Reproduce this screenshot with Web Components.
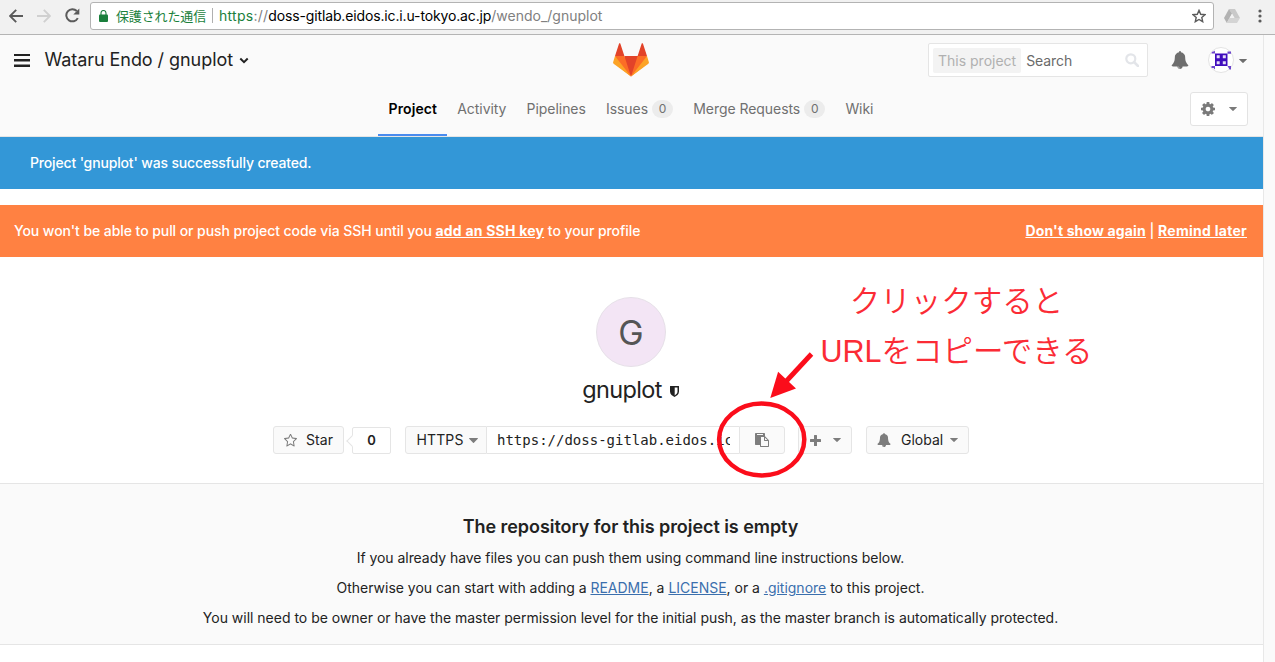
<!DOCTYPE html>
<html lang="en">
<head>
<meta charset="utf-8">
<title>Wataru Endo / gnuplot</title>
<style>
html,body{margin:0;height:100%;overflow:hidden;background:#fff}
body{font:14px/20px Inter,"Noto Sans CJK JP",sans-serif;color:#222}
</style>
</head>
<body>
<gl-page></gl-page>
<script>
const ICONS = {
  bell: ['0 0 1792 1792','<path d="M912 1696q0-16-16-16-59 0-101.5-42.5t-42.5-101.5q0-16-16-16t-16 16q0 73 51.5 124.5t124.5 51.5q16 0 16-16zm816-288q0 52-38 90t-90 38h-448q0 106-75 181t-181 75-181-75-75-181h-448q-52 0-90-38t-38-90q50-42 91-88t85-119.5 74.5-158.5 50-206 19.5-260q0-152 117-282.5t307-158.5q-8-19-8-39 0-40 28-68t68-28 68 28 28 68q0 20-8 39 190 28 307 158.5t117 282.5q0 139 19.5 260t50 206 74.5 158.5 85 119.5 91 88z"/>'],
  cog: ['128 128 1536 1536','<path d="M1152 896q0-106-75-181t-181-75-181 75-75 181 75 181 181 75 181-75 75-181zm512-109v222q0 12-8 23t-20 13l-185 28q-19 54-39 91 35 50 107 138 10 12 10 25t-9 23q-27 37-99 108t-94 71q-12 0-26-9l-138-108q-44 23-91 38-16 136-29 186-7 28-36 28h-222q-14 0-24.5-8.5t-11.5-21.5l-28-184q-49-16-90-37l-141 107q-10 9-25 9-14 0-25-11-126-114-165-168-7-10-7-23 0-12 8-23 15-21 51-66.5t54-70.5q-27-50-41-99l-183-27q-13-2-21-12.5t-8-23.5v-222q0-12 8-23t19-13l186-28q14-46 39-92-40-57-107-138-10-12-10-24 0-10 9-23 26-36 98.5-107.5t94.5-71.5q13 0 26 10l138 107q44-23 91-38 16-136 29-186 7-28 36-28h222q14 0 24.5 8.5t11.5 21.5l28 184q49 16 90 37l142-107q9-9 24-9 13 0 25 10 129 119 165 170 7 8 7 22 0 12-8 23-15 21-51 66.5t-54 70.5q26 50 41 98l183 28q13 2 21 12.5t8 23.5z"/>'],
  star: ['64 100 1664 1580','<path d="M1201 1004l306-297-422-62-189-382-189 382-422 62 306 297-73 421 378-199 377 199zm527-357q0 22-26 48l-363 354 86 500q1 7 1 20 0 50-41 50-19 0-40-12l-449-236-449 236q-22 12-40 12-21 0-31.5-14.5t-10.5-35.5q0-6 2-20l86-500-364-354q-25-27-25-48 0-37 56-46l502-73 225-455q19-41 49-41t49 41l225 455 502 73q56 9 56 46z"/>'],
  copy: ['0 0 1792 1792','<path d="M768 1664h896v-640h-416q-40 0-68-28t-28-68v-416h-384v1152zm256-1440v-64q0-13-9.5-22.5t-22.5-9.5h-704q-13 0-22.5 9.5t-9.5 22.5v64q0 13 9.5 22.5t22.5 9.5h704q13 0 22.5-9.5t9.5-22.5zm256 672h299l-299-299v299zm512 128v672q0 40-28 68t-68 28h-960q-40 0-68-28t-28-68v-160h-544q-40 0-68-28t-28-68v-1344q0-40 28-68t68-28h1088q40 0 68 28t28 68v328q21 13 36 28l408 408q28 28 48 76t20 88z"/>'],
  plus: ['0 0 11 11','<path d="M4 .6Q4 0 4.6 0h1.8Q7 0 7 .6V4h3.4q.6 0 .6.6v1.8q0 .6-.6.6H7v3.4q0 .6-.6.6H4.600Q4 11 4 10.400V7H.6Q0 7 0 6.400V4.600Q0 4 .6 4H4z"/>'],
  caret: ['0 0 8 4','<path d="M.4 0h7.200q.6 0 .2.5L4.400 3.800q-.4.4-.8 0L.2.5Q-.2 0 .4 0z"/>'],
  chevron: ['0 0 10 7','<path d="M1.300 1.500 5 5.100 8.700 1.500" fill="none" stroke="currentColor" stroke-width="2"/>'],
  bars: ['0 0 16 13','<path d="M0 0h16v2H0zM0 5h16v2.400H0zM0 10.500h16v2.500H0z"/>'],
  shield: ['0 0 9 11','<path d="M.3 0h8.400q.3 0 .3.3V5.600C9 8.400 6.500 10.200 4.500 11 2.500 10.200 0 8.400 0 5.600V.3Q0 0 .3 0zM4.700 1.500v7.900C6.300 8.500 7.500 7.300 7.500 5.600V1.500z" fill-rule="evenodd"/>'],
  search: ['0 0 14 14','<circle cx="5.800" cy="5.800" r="4.500" fill="none" stroke="currentColor" stroke-width="2.200"/><path d="m9 9 4 4" stroke="currentColor" stroke-width="2.500" stroke-linecap="round"/>'],
  back: ['0 0 14 14','<path d="M14 7H1.200M7.200.8 1 7l6.200 6.200" fill="none" stroke="currentColor" stroke-width="1.900"/>'],
  forward: ['0 0 14 14','<path d="M0 7h12.800M6.800.8 13 7l-6.200 6.200" fill="none" stroke="currentColor" stroke-width="1.900"/>'],
  reload: ['0 0 15 15','<path d="M12.800 10.100A6.100 6.100 0 1 1 11.800 3" fill="none" stroke="currentColor" stroke-width="2"/><path d="M14.300.5v6H8.300z"/>'],
  lock: ['0 0 9 12','<path d="M1 4.500h7q1 0 1 1V11q0 1-1 1H1q-1 0-1-1V5.500q0-1 1-1z"/><path d="M2 5V3a2.500 2.500 0 0 1 5 0v2" fill="none" stroke="currentColor" stroke-width="1.100"/>'],
  bookmark: ['0 0 14 14','<path d="m7 1.400 1.700 3.900 4.300.4-3.200 2.800.9 4.200L7 10.500l-3.700 2.200.9-4.200L1 5.700l4.300-.4z" fill="none" stroke="currentColor" stroke-width="1.400"/>'],
  drive: ['0 0 16 14','<path d="M5 0h6l5 9h-5.500L8 4.500z" fill="#c9c9c9"/><path d="M5 0 0 9l2.800 5L8 4.500z" fill="#b2b2b2"/><path d="M16 9l-3 5H2.800l2.600-5z" fill="#d4d4d4"/><path d="M8 5 5.600 9h4.800z" fill="#f2f2f2"/>'],
  dots: ['0 0 4 14','<circle cx="2" cy="2" r="1.600"/><circle cx="2" cy="7" r="1.600"/><circle cx="2" cy="12" r="1.600"/>'],
  logo: ['0 0 36 36','<path fill="#e24329" d="M2 14l9.380 9v-9l-4-12.280c-.205-.632-1.176-.632-1.380 0zM34 14l-9.380 9v-9l4-12.280c.205-.632 1.176-.632 1.380 0zM18 34.380 3 14h30z"/><path fill="#fc6d26" d="M18 34.380 11.380 14H2l4 11zM18 34.380 24.620 14H34l-4 11z"/><path fill="#fca326" d="M2 14 .1 20.160c-.18.565 0 1.200.5 1.560L18 34.380zM34 14l1.900 6.160c.18.565 0 1.200-.5 1.560L18 34.380z"/>'],
  identicon: ['0 0 26 26','<circle cx="13" cy="13" r="12.500" fill="#fff" stroke="#e3e3e3"/><path fill="#3f0bbd" d="M7 6.500h12.500v12.500H7z"/><path fill="#e4dcf7" d="M8.700 8.200h3v3h-3zM14.800 8.200h3v3h-3zM8.700 14.300h3v3h-3zM14.800 14.300h3v3h-3z"/><path fill="#6b43cb" d="M7 3.200v3.300H3.500q0-2 1.500-2 2 0 2-1.300zM19.500 4.500H23v2.200h-3.500zM3.500 19H7v3.500L5.500 21H3.500zM19.500 19H23v3.500h-1.500z"/>'],
};
class GlIcon extends HTMLElement {
  constructor(){
    super();
    const [box, body] = ICONS[this.getAttribute('name')];
    const w = this.getAttribute('w'), h = this.getAttribute('h') || w;
    this.attachShadow({mode:'open'}).innerHTML =
      `<style>:host{display:block;flex:none;white-space:normal;width:${w}px;height:${h}px}svg{display:block;width:100%;height:100%}</style><svg viewBox="${box}" preserveAspectRatio="none" fill="currentColor">${body}</svg>`;
  }
}
customElements.define('gl-icon', GlIcon);

const define = (name, html) => {
  const t = document.createElement('template');
  t.innerHTML = html;
  customElements.define(name, class extends HTMLElement {
    constructor(){ super(); this.attachShadow({mode:'open'}).append(document.importNode(t.content, true)); }
  });
};

define('browser-bar', `
<style>
:host{display:flex;align-items:center;box-sizing:border-box;height:35px;padding:0 13px 3px 9px;background:#f1f1f1;border-bottom:1px solid #b4b4b4;color:#5b5b5b}
.fwd{color:#d0d0d0;margin:0 14px 0 14px}
.omni{flex:1;display:flex;align-items:center;box-sizing:border-box;height:28px;margin:0 10px 0 10px;padding:0 7px 0 8px;background:#fff;border:1px solid #b3b3b3;border-radius:3px;color:#808080;white-space:pre}
.sec{font:13px/20px "Noto Sans CJK JP",sans-serif;letter-spacing:-.14px;margin-left:8px}
.g{color:#1a7f3c}.k{color:#000}
.sep{width:1px;height:15px;background:#b0b0b0;margin:0 6px}
.star{margin-left:auto;color:#5b5b5b}
.dots{margin-left:18px}
</style>
<gl-icon name="back" w="14"></gl-icon><gl-icon class="fwd" name="forward" w="14"></gl-icon><gl-icon name="reload" w="15"></gl-icon>
<div class="omni"><gl-icon class="g" name="lock" w="9" h="12"></gl-icon><span class="sec g">保護された通信</span><i class="sep"></i><span style="letter-spacing:.26px"><span class="g">https</span>://</span><span class="k" style="letter-spacing:-.138px">doss-gitlab.eidos.ic.i.u-tokyo.ac.jp</span><span>/wendo_/gnuplot</span><gl-icon class="star" name="bookmark" w="14"></gl-icon></div>
<gl-icon name="drive" w="16" h="14"></gl-icon><gl-icon class="dots" name="dots" w="4" h="14"></gl-icon>`);

define('gl-tab', `
<style>
:host{display:flex;align-items:center;box-sizing:border-box;height:53px;padding:0 10.100px;color:#707070;border-bottom:2px solid transparent;letter-spacing:-.055px}
:host([active]){color:#000;font-weight:600;border-color:#4a8bee;letter-spacing:.09px}
</style><slot></slot>`);
define('gl-badge', `
<style>:host{display:block;width:21px;height:18px;border-radius:9px;background:#ececec;font-size:12px;line-height:18px;text-align:center;margin-left:4px;letter-spacing:0}</style><slot></slot>`);

define('gl-header', `
<style>
:host{display:block;height:101px;background:#fafafa;border-bottom:1px solid #e5e5e5}
.top{display:grid;grid-template-columns:1fr 36px 1fr;box-sizing:border-box;height:48px;align-items:center;padding:2px 16px 0 14px}
.left,.right{display:flex;align-items:center}
.right{justify-content:flex-end}
.title{font-size:18px;letter-spacing:-.06px;margin:0 6px 0 14.500px}
.search{display:flex;align-items:center;box-sizing:border-box;width:220px;height:34px;border:1px solid #e5e5e5;background:#fff;padding:0 8px 0 4px;border-radius:2px;color:#6a6a6a}
.chip{background:#f3f3f3;color:#b0b0b0;height:25px;line-height:25px;padding:0 5px;border-radius:2px;margin-right:5px}
.find{line-height:25px;letter-spacing:-.07px}
.mag{margin-left:auto;color:#e3e5e9}
.bell{margin:0 19px 0 23px;color:#6e6e6e}
.car{color:#6e6e6e;margin:2px 0 0 5px}
.nav{display:grid;grid-template-columns:1fr auto 1fr;align-items:start}
.tabs{display:flex;grid-column:2;margin-right:1px}
.set{justify-self:end;display:flex;align-items:center;justify-content:space-between;box-sizing:border-box;width:58px;height:34px;margin:9px 15px 0 0;padding:0 10px;background:#fff;border:1px solid #e3e3e3;border-radius:3px;color:#7a7a7a}
</style>
<div class="top">
 <div class="left"><gl-icon name="bars" w="16" h="13"></gl-icon><span class="title">Wataru Endo / gnuplot</span><gl-icon name="chevron" w="10" h="7"></gl-icon></div>
 <gl-icon name="logo" w="36"></gl-icon>
 <div class="right"><div class="search"><span class="chip">This project</span><span class="find">Search</span><gl-icon class="mag" name="search" w="14"></gl-icon></div>
 <gl-icon class="bell" name="bell" w="18" h="18"></gl-icon><gl-icon name="identicon" w="26"></gl-icon><gl-icon class="car" name="caret" w="8" h="4"></gl-icon></div>
</div>
<div class="nav">
 <div class="tabs"><gl-tab active>Project</gl-tab><gl-tab>Activity</gl-tab><gl-tab>Pipelines</gl-tab><gl-tab>Issues<gl-badge>0</gl-badge></gl-tab><gl-tab>Merge Requests<gl-badge>0</gl-badge></gl-tab><gl-tab>Wiki</gl-tab></div>
 <div class="set"><gl-icon name="cog" w="14"></gl-icon><gl-icon name="caret" w="8" h="4"></gl-icon></div>
</div>`);

define('gl-alert', `
<style>
:host{display:flex;justify-content:space-between;align-items:center;box-sizing:border-box;height:52px;color:#fff;font-weight:500;letter-spacing:-.07px;white-space:pre;padding:0 16px 0 14px;background:#ff8142}
:host([kind=notice]){background:#3397d7;padding-left:30px;margin-bottom:16px;letter-spacing:-.16px}
</style><slot></slot><slot name="actions"></slot>`);

define('gl-button', `
<style>:host{display:flex;align-items:center;box-sizing:border-box;height:28px;background:#fafafa;border:1px solid #e5e5e5;border-radius:3px;color:#7d7d7d}
::slotted(span){color:#222}</style><slot></slot>`);

define('project-home', `
<style>
:host{display:flex;flex-direction:column;align-items:center;position:relative;height:226px}
.av{box-sizing:border-box;width:70px;height:70px;margin:40px 1px 0 0;border-radius:50%;border:1px solid #e6e0e8;background:#f3e5f5;color:#555;font-size:34px;line-height:70px;text-align:center;flex:none}
h1{display:flex;align-items:center;gap:8px;margin:8px 2px 0 0;font-weight:400;font-size:23.500px;line-height:30px;letter-spacing:-.65px}
h1 gl-icon{margin-top:2px}
.row{display:flex;align-items:center;align-self:flex-start;margin:21px 0 0 273px}
.count{position:relative;box-sizing:border-box;width:39px;height:27px;margin:1px 14px 0 8px;border:1px solid #e5e5e5;border-radius:2px;text-align:center;font-weight:600;line-height:25px;font-size:13px}
.count::before{content:"";position:absolute;left:-5px;top:8.500px;width:7px;height:7px;background:#fff;border:solid #e5e5e5;border-width:0 0 1px 1px;transform:rotate(45deg)}
.star{width:71px;padding-left:10px;gap:9px;letter-spacing:.1px}
.proto{width:82px;padding-left:10.500px;gap:5px;border-radius:3px 0 0 3px;letter-spacing:.12px}
.url{box-sizing:border-box;width:252px;height:28px;border:solid #e5e5e5;border-width:1px 0;padding:0 9px 0 10px}
.clip{overflow:hidden;font:14px/26px "DejaVu Sans Mono",monospace;white-space:nowrap}
.copy{width:46px;justify-content:center;border-radius:0 3px 3px 0}
.plus{width:54px;margin-left:13px;padding-left:11px;gap:12px}
.glob{width:103px;margin-left:14px;padding-left:10px;gap:10px}
.glob .c{margin-left:-3px}
svg{position:absolute;left:700px;top:80px;width:130px;height:150px}
.note{position:absolute;left:816px;top:19px;width:281px;text-align:center;font:350 30.500px/50px "Liberation Sans","Noto Sans CJK JP DemiLight","Noto Sans CJK JP",sans-serif;color:#fb2b35;white-space:nowrap}
</style>
<div class="av">G</div>
<h1><span>gnuplot</span><gl-icon name="shield" w="9" h="11"></gl-icon></h1>
<div class="row">
<gl-button class="star"><gl-icon name="star" w="13" h="13"></gl-icon><span>Star</span></gl-button><div class="count">0</div>
<gl-button class="proto"><span>HTTPS</span><gl-icon name="caret" w="9" h="5"></gl-icon></gl-button><div class="url"><div class="clip">https://doss-gitlab.eidos.ic</div></div><gl-button class="copy"><gl-icon name="copy" w="14" h="14"></gl-icon></gl-button>
<gl-button class="plus"><gl-icon name="plus" w="11"></gl-icon><gl-icon name="caret" w="8" h="4"></gl-icon></gl-button>
<gl-button class="glob"><gl-icon name="bell" w="14" h="14"></gl-icon><span>Global</span><gl-icon class="c" name="caret" w="8" h="4"></gl-icon></gl-button>
</div>
<svg viewBox="700 337 130 150"><ellipse cx="761.700" cy="439.500" rx="42.600" ry="35.900" fill="none" stroke="#fb0d1b" stroke-width="4.500"/><path d="M811.500 354 786 381.500" stroke="#fb0d1b" stroke-width="4.800"/><path d="M770.300 398 778.100 371.700 796 388.500z" fill="#fb0d1b"/></svg>
<div class="note">クリックすると<br>URLをコピーできる</div>`);

define('empty-repo', `
<style>
:host{display:block;box-sizing:border-box;height:162px;border:solid #e5e5e5;border-width:1px 0;background:#fafafa;text-align:center;padding:32px 2px 0 0}
h2{margin:0 0 10px;font-size:18px;line-height:22px;font-weight:600;letter-spacing:-.06px}
p{margin:0 0 10px;letter-spacing:-.012px}
.first{letter-spacing:-.05px}
a{color:#3b6fad;text-decoration:underline}
</style>
<h2>The repository for this project is empty</h2>
<p class="first">If you already have files you can push them using command line instructions below.</p>
<p>Otherwise you can start with adding a <a>README</a>, a <a>LICENSE</a>, or a <a>.gitignore</a> to this project.</p>
<p>You will need to be owner or have the master permission level for the initial push, as the master branch is automatically protected.</p>`);

define('gl-page', `
<style>
:host{display:flex;flex-direction:column;height:662px}
.body{flex:1;display:grid;grid-template-columns:1263px 1fr}
.track{background:#fafafa;border-left:1px solid #e8e8e8}
a{font-weight:700;text-decoration:underline;letter-spacing:.22px}
</style>
<browser-bar></browser-bar>
<div class="body"><main>
<gl-header></gl-header>
<gl-alert kind="notice">Project 'gnuplot' was successfully created.</gl-alert>
<gl-alert><span>You won't be able to pull or push project code via SSH until you <a>add an SSH key</a> to your profile</span><span slot="actions"><a style="letter-spacing:.15px">Don't show again</a> | <a style="letter-spacing:.27px">Remind later</a></span></gl-alert>
<project-home></project-home>
<empty-repo></empty-repo>
</main><div class="track"></div></div>`);
</script>
</body>
</html>
